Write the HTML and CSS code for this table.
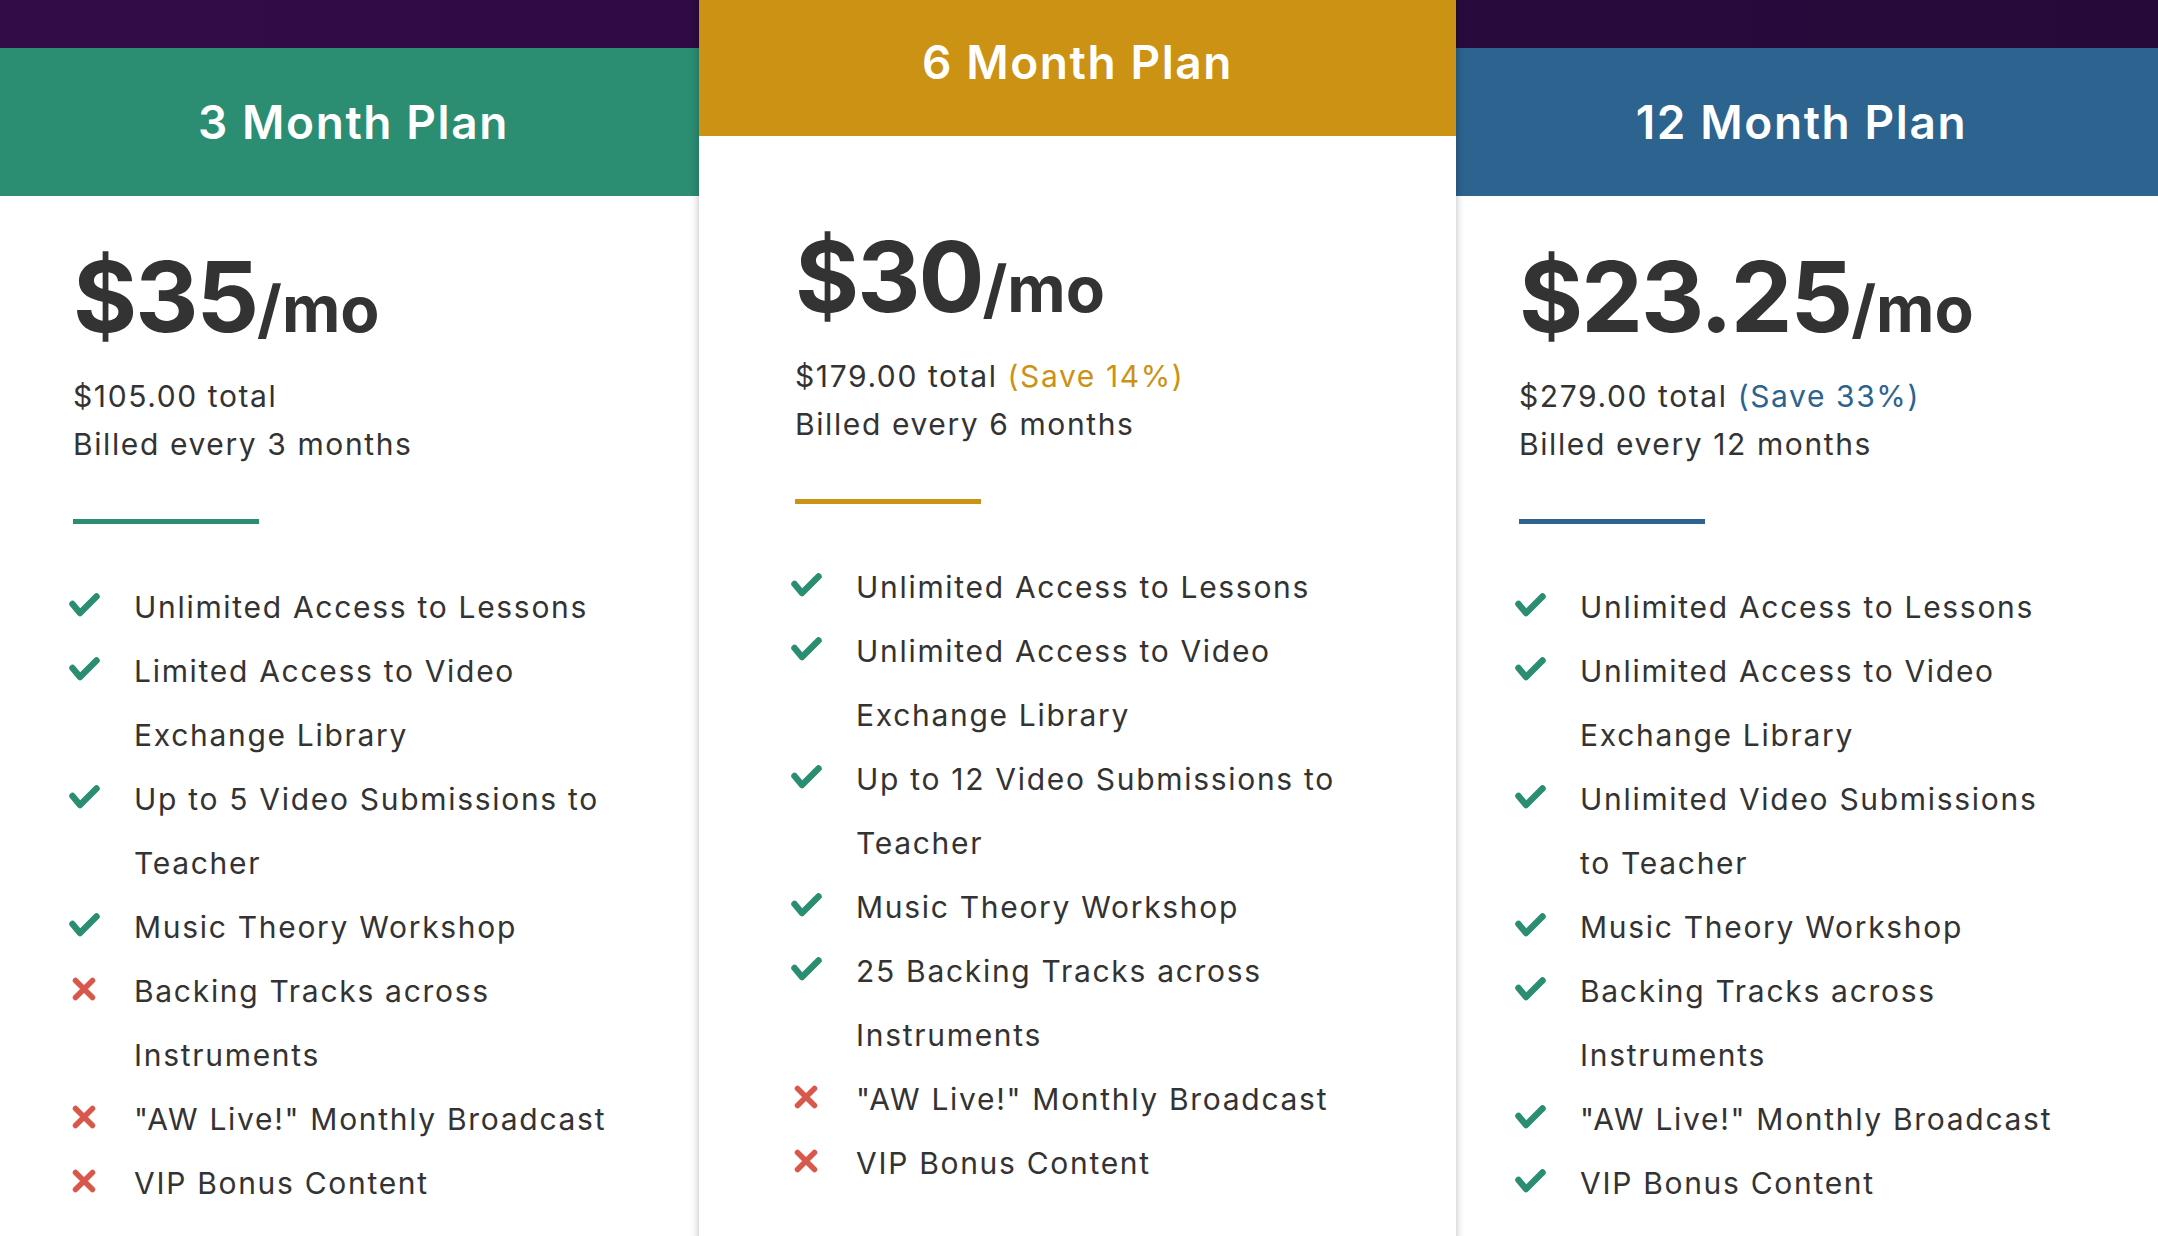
FILE: index.html
```html
<!DOCTYPE html>
<html lang="en">
<head>
<meta charset="utf-8">
<title>Plans</title>
<link rel="stylesheet" href="styles.css">
</head>
<body>
<div class="plans">
  <section class="plan plan-green">
    <header class="plan-head"><h2>3 Month Plan</h2></header>
    <div class="plan-body">
      <div class="price">$35<span class="per">/mo</span></div>
      <p class="sub">$105.00 total</p>
      <p class="sub">Billed every 3 months</p>
      <div class="rule"></div>
      <ul class="features">
        <li><span class="ic"><svg class="yes" viewBox="0 0 31 24"><polyline points="3.5,11 11,20 27.5,3.5"/></svg></span><span class="t">Unlimited Access to Lessons</span></li>
        <li><span class="ic"><svg class="yes" viewBox="0 0 31 24"><polyline points="3.5,11 11,20 27.5,3.5"/></svg></span><span class="t">Limited Access to Video<br>Exchange Library</span></li>
        <li><span class="ic"><svg class="yes" viewBox="0 0 31 24"><polyline points="3.5,11 11,20 27.5,3.5"/></svg></span><span class="t">Up to 5 Video Submissions to<br>Teacher</span></li>
        <li><span class="ic"><svg class="yes" viewBox="0 0 31 24"><polyline points="3.5,11 11,20 27.5,3.5"/></svg></span><span class="t">Music Theory Workshop</span></li>
        <li><span class="ic"><svg class="no" viewBox="0 0 31 24"><path d="M6.5 3.5 L23.5 20.5 M23.5 3.5 L6.5 20.5"/></svg></span><span class="t">Backing Tracks across<br>Instruments</span></li>
        <li><span class="ic"><svg class="no" viewBox="0 0 31 24"><path d="M6.5 3.5 L23.5 20.5 M23.5 3.5 L6.5 20.5"/></svg></span><span class="t">"AW Live!" Monthly Broadcast</span></li>
        <li><span class="ic"><svg class="no" viewBox="0 0 31 24"><path d="M6.5 3.5 L23.5 20.5 M23.5 3.5 L6.5 20.5"/></svg></span><span class="t">VIP Bonus Content</span></li>
      </ul>
    </div>
  </section>
  <section class="plan plan-gold">
    <header class="plan-head"><h2>6 Month Plan</h2></header>
    <div class="plan-body">
      <div class="price">$30<span class="per">/mo</span></div>
      <p class="sub">$179.00 total <span class="save">(Save 14%)</span></p>
      <p class="sub">Billed every 6 months</p>
      <div class="rule"></div>
      <ul class="features">
        <li><span class="ic"><svg class="yes" viewBox="0 0 31 24"><polyline points="3.5,11 11,20 27.5,3.5"/></svg></span><span class="t">Unlimited Access to Lessons</span></li>
        <li><span class="ic"><svg class="yes" viewBox="0 0 31 24"><polyline points="3.5,11 11,20 27.5,3.5"/></svg></span><span class="t">Unlimited Access to Video<br>Exchange Library</span></li>
        <li><span class="ic"><svg class="yes" viewBox="0 0 31 24"><polyline points="3.5,11 11,20 27.5,3.5"/></svg></span><span class="t">Up to 12 Video Submissions to<br>Teacher</span></li>
        <li><span class="ic"><svg class="yes" viewBox="0 0 31 24"><polyline points="3.5,11 11,20 27.5,3.5"/></svg></span><span class="t">Music Theory Workshop</span></li>
        <li><span class="ic"><svg class="yes" viewBox="0 0 31 24"><polyline points="3.5,11 11,20 27.5,3.5"/></svg></span><span class="t">25 Backing Tracks across<br>Instruments</span></li>
        <li><span class="ic"><svg class="no" viewBox="0 0 31 24"><path d="M6.5 3.5 L23.5 20.5 M23.5 3.5 L6.5 20.5"/></svg></span><span class="t">"AW Live!" Monthly Broadcast</span></li>
        <li><span class="ic"><svg class="no" viewBox="0 0 31 24"><path d="M6.5 3.5 L23.5 20.5 M23.5 3.5 L6.5 20.5"/></svg></span><span class="t">VIP Bonus Content</span></li>
      </ul>
    </div>
  </section>
  <section class="plan plan-blue">
    <header class="plan-head"><h2>12 Month Plan</h2></header>
    <div class="plan-body">
      <div class="price">$23.25<span class="per">/mo</span></div>
      <p class="sub">$279.00 total <span class="save">(Save 33%)</span></p>
      <p class="sub">Billed every 12 months</p>
      <div class="rule"></div>
      <ul class="features">
        <li><span class="ic"><svg class="yes" viewBox="0 0 31 24"><polyline points="3.5,11 11,20 27.5,3.5"/></svg></span><span class="t">Unlimited Access to Lessons</span></li>
        <li><span class="ic"><svg class="yes" viewBox="0 0 31 24"><polyline points="3.5,11 11,20 27.5,3.5"/></svg></span><span class="t">Unlimited Access to Video<br>Exchange Library</span></li>
        <li><span class="ic"><svg class="yes" viewBox="0 0 31 24"><polyline points="3.5,11 11,20 27.5,3.5"/></svg></span><span class="t">Unlimited Video Submissions<br>to Teacher</span></li>
        <li><span class="ic"><svg class="yes" viewBox="0 0 31 24"><polyline points="3.5,11 11,20 27.5,3.5"/></svg></span><span class="t">Music Theory Workshop</span></li>
        <li><span class="ic"><svg class="yes" viewBox="0 0 31 24"><polyline points="3.5,11 11,20 27.5,3.5"/></svg></span><span class="t">Backing Tracks across<br>Instruments</span></li>
        <li><span class="ic"><svg class="yes" viewBox="0 0 31 24"><polyline points="3.5,11 11,20 27.5,3.5"/></svg></span><span class="t">"AW Live!" Monthly Broadcast</span></li>
        <li><span class="ic"><svg class="yes" viewBox="0 0 31 24"><polyline points="3.5,11 11,20 27.5,3.5"/></svg></span><span class="t">VIP Bonus Content</span></li>
      </ul>
    </div>
  </section>
</div>
</body>
</html>
```

FILE: styles.css
```css
html, body {
  margin: 0;
  padding: 0;
  background: #ffffff;
}
body {
  width: 2158px;
  height: 1236px;
  overflow: hidden;
  font-family: Inter, "Open Sans", sans-serif;
  color: #333333;
}
.plans {
  display: flex;
  align-items: flex-start;
  width: 2158px;
  height: 1236px;
  overflow: hidden;
  background: linear-gradient(to right, #320c47, #260939) top left / 100% 48px no-repeat, #ffffff;
}
.plan {
  background: #ffffff;
  min-height: 1300px;
}
.plan-green { width: 699px; margin-top: 48px; --accent: #2b8d72; }
.plan-gold {
  width: 757px;
  margin-top: -12px;
  --accent: #cc9214;
  position: relative;
  z-index: 2;
  box-shadow: 0 0 8px rgba(0, 0, 0, 0.28);
}
.plan-blue { width: 702px; margin-top: 48px; --accent: #2c638f; }

.plan-head {
  height: 148px;
  background: var(--accent);
  display: flex;
  align-items: center;
  justify-content: center;
}
.plan-green .plan-head { padding-left: 8px; }
.plan-blue .plan-head { padding-right: 11px; }
.plan-head h2 {
  margin: 0;
  color: #ffffff;
  font-size: 46px;
  font-weight: 600;
  letter-spacing: 1.6px;
}
.plan-body { padding: 51px 0 0 73px; }
.plan-gold .plan-body { padding: 91px 0 0 96px; }
.plan-blue .plan-body { padding-left: 63px; }

.price {
  font-size: 98px;
  font-weight: 700;
  line-height: 100px;
  letter-spacing: -2px;
  white-space: nowrap;
}
.per {
  font-size: 64px;
  letter-spacing: 0;
}
.sub {
  margin: 0;
  font-size: 30px;
  line-height: 48px;
  letter-spacing: 1.6px;
  white-space: nowrap;
}
.price + .sub { margin-top: 13px; }
.save { color: var(--accent); }
.rule {
  width: 186px;
  height: 5px;
  background: var(--accent);
  margin-top: 51px;
}
.features {
  list-style: none;
  margin: 51px 0 0 0;
  padding: 0;
}
.features li {
  display: flex;
  align-items: flex-start;
  font-size: 30px;
  line-height: 64px;
  letter-spacing: 1.7px;
  white-space: nowrap;
}
.ic {
  flex: 0 0 65px;
  margin-left: -4px;
  height: 64px;
  display: flex;
  align-items: center;
}
.ic svg {
  width: 31px;
  height: 24px;
  fill: none;
  stroke-linecap: round;
  stroke-linejoin: round;
  margin-top: -5px;
}
.ic .yes { stroke: #2b8d72; stroke-width: 6.5; }
.ic .no { stroke: #d9584c; stroke-width: 5.5; }
.t { display: block; }
```
